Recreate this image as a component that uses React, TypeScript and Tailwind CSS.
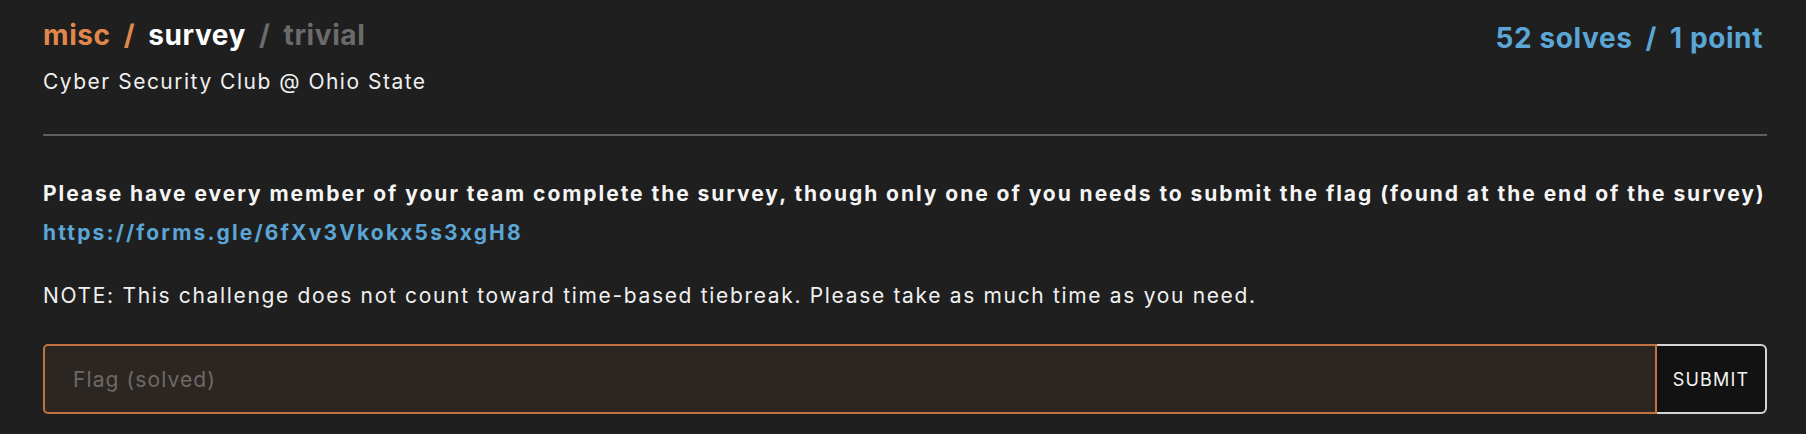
export default function App() {
  return (
    <div
      className="min-h-screen bg-[#1f1f1f] pl-[43px] pr-[39px] text-[#f2f2f2]"
      style={{ fontFamily: "Inter, 'Noto Sans', sans-serif" }}
    >
      {/* Header */}
      <div className="flex items-start justify-between pt-[18px]">
        <div>
          <div className="flex gap-[13px] text-[28px] font-bold leading-[34px] tracking-[0.6px]">
            <span className="text-[#e0874d]">misc</span>
            <span className="text-[#e0874d]">/</span>
            <span className="text-white">survey</span>
            <span className="text-[#6b6b6b]">/</span>
            <span className="text-[#6b6b6b]">trivial</span>
          </div>
          <div className="mt-[16px] text-[21px] leading-[28px] tracking-[1.5px] text-[#f0f0f0]">
            Cyber Security Club @ Ohio State
          </div>
        </div>
        <div className="flex gap-[13px] pr-[4px] pt-[3px] text-[28px] font-bold leading-[34px] tracking-[0.6px] text-[#5ba6d6]">
          <span>52 solves</span>
          <span>/</span>
          <span>1 point</span>
        </div>
      </div>

      <div className="mt-[38px] h-[2px] bg-[#5f5f5f]" />

      {/* Description */}
      <div className="mt-[40px] text-[21px] leading-[35px]">
        <p className="whitespace-nowrap font-bold tracking-[1.95px] text-[#f5f5f5]">
          Please have every member of your team complete the survey, though only one of you needs to submit the flag
          (found at the end of the survey)
        </p>
        <a className="mt-[4px] block font-bold tracking-[2.15px] text-[#5ba6d6]" href="#">
          https://forms.gle/6fXv3Vkokx5s3xgH8
        </a>
        <p className="mt-[28px] tracking-[1.67px] text-[#f0f0f0]">
          NOTE: This challenge does not count toward time-based tiebreak. Please take as much time as you need.
        </p>
      </div>

      {/* Flag form */}
      <div className="mt-[31px] flex h-[70px]">
        <input
          type="text"
          placeholder="Flag (solved)"
          className="h-full flex-1 rounded-l-[5px] border-2 border-[#c0733f] bg-[#2c2623] pl-[28px] text-[21px] tracking-[1.1px] text-white outline-none placeholder:text-[#6d6965]"
        />
        <button className="h-full w-[110px] rounded-r-[6px] border-2 border-l-0 border-[#d4d4d4] bg-[#121212] text-[18px] tracking-[1.2px] text-[#f2f2f2]">
          SUBMIT
        </button>
      </div>
    </div>
  );
}
